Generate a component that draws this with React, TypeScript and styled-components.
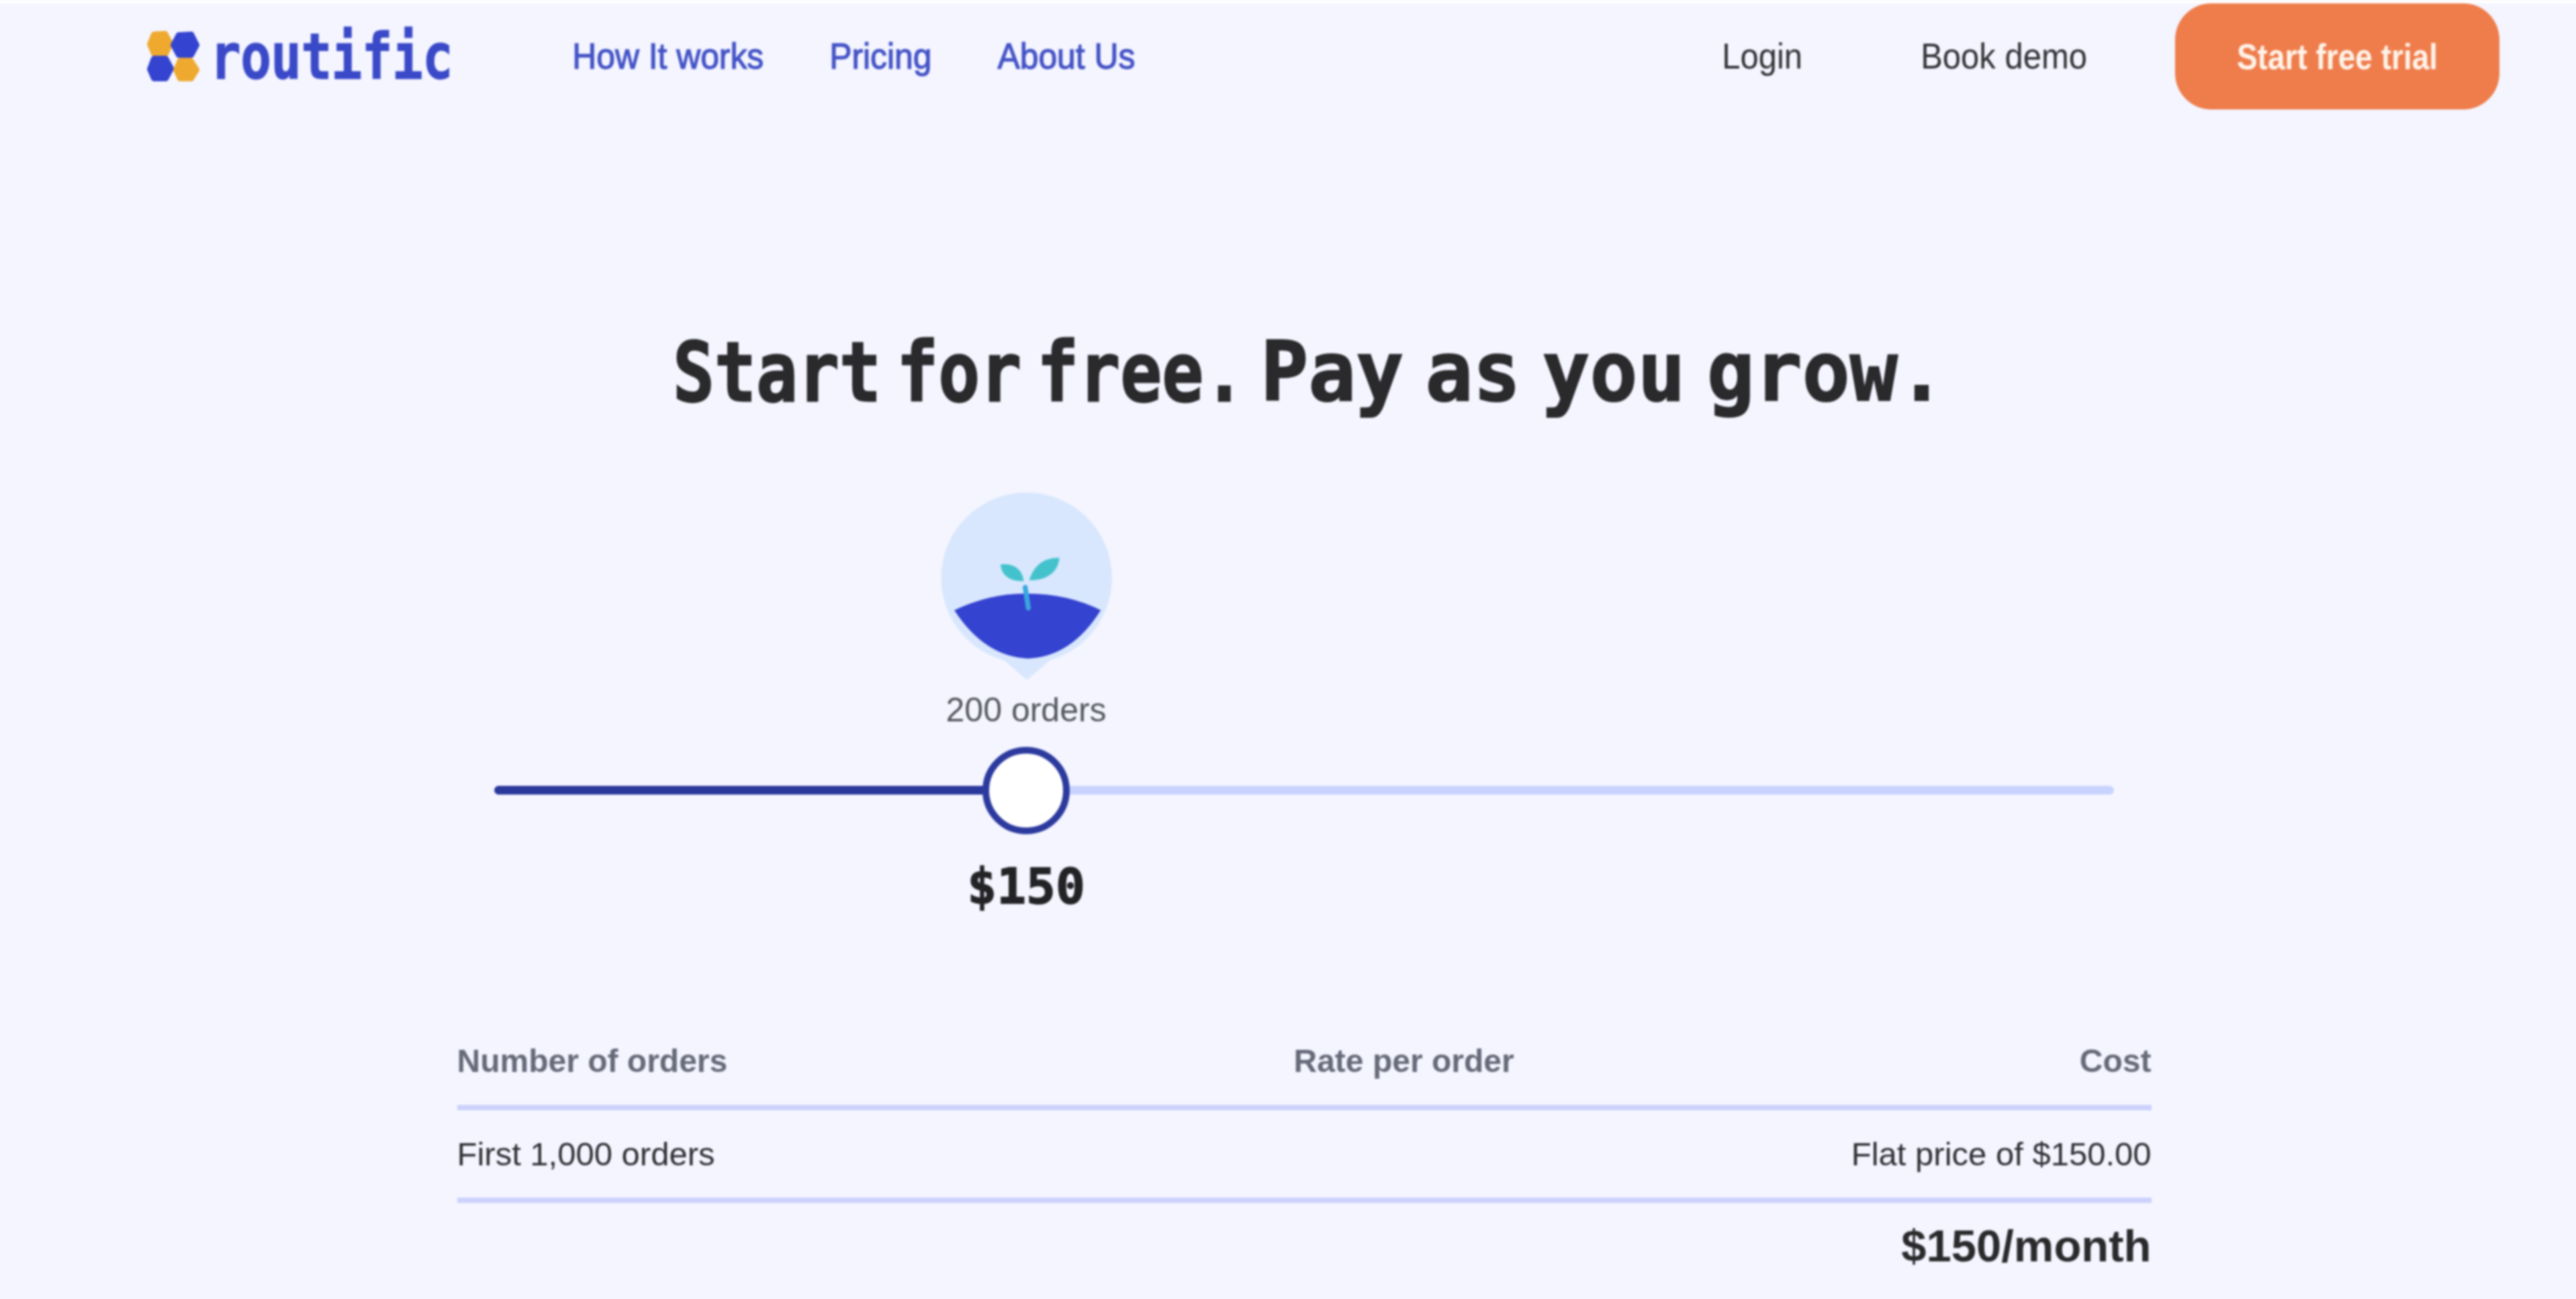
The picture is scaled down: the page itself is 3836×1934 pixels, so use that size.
import React, { ReactElement } from 'react'
import styled, { createGlobalStyle } from 'styled-components'

const GlobalStyle = createGlobalStyle`
  html, body {
    margin: 0;
    background: #f4f5ff;
  }
`

const Page = styled.div`
  box-sizing: border-box;
  height: 1934px;
  overflow: hidden;
  border-top: 5px solid #ffffff;
  background: #f4f5ff;
  color: #2a2a2c;
  font-family: 'Liberation Sans', Arial, sans-serif;
  filter: blur(1.4px);
`

const Header = styled.header`
  display: flex;
  align-items: center;
  height: 158px;
  padding: 0 114px 0 219px;
`

const Brand = styled.a`
  display: flex;
  align-items: center;
  gap: 16px;
  margin-right: 178px;
`

const BrandName = styled.span`
  font-family: 'DejaVu Sans Mono', monospace;
  font-size: 76px;
  font-weight: 700;
  line-height: 100px;
  letter-spacing: -0.6px;
  color: #3a49c8;
  -webkit-text-stroke: 1px #3a49c8;
  transform: scaleY(1.25);
`

const Nav = styled.nav`
  display: flex;
  gap: 98px;
`

const NavLink = styled.a`
  font-size: 49.8px;
  color: #4453c6;
  -webkit-text-stroke: 1.2px #4453c6;
  transform: scaleY(1.08);
`

const Actions = styled.div`
  display: flex;
  align-items: center;
  margin-left: auto;
`

const PlainLink = styled.a<{ $gap: number }>`
  margin-right: ${p => p.$gap}px;
  font-size: 49px;
  color: #303034;
  transform: scaleY(1.08);
`

const TrialButton = styled.button`
  width: 483px;
  height: 158px;
  border: 0;
  border-radius: 54px;
  background: #ef7d4c;
  color: #fff4ea;
  font-family: 'Liberation Sans', Arial, sans-serif;
  font-size: 46px;
  font-weight: 700;
`

const TrialLabel = styled.span`
  display: inline-block;
  transform: scaleY(1.18);
`

const Main = styled.main`
  display: flex;
  flex-direction: column;
  align-items: center;
  padding-left: 48px;
`

const Heading = styled.h1`
  margin: 327px 0 0 15px;
  font-family: 'DejaVu Sans Mono', monospace;
  font-weight: 700;
  line-height: 130px;
  color: #2a2a2c;
  white-space: pre;
  -webkit-text-stroke: 2px #2a2a2c;
`

const HeadingPart = styled.span<{ $size: number; $words: number; $stretch: number }>`
  display: inline-block;
  font-size: ${p => p.$size}px;
  word-spacing: ${p => p.$words}px;
  transform: scaleY(${p => p.$stretch});
  transform-origin: 50% 75%;
`

const Slider = styled.section`
  width: 2412px;
  margin-top: 83px;
`

const AtValue = styled.div<{ $pct: number }>`
  display: flex;
  flex-direction: column;
  align-items: center;
  width: 400px;
  margin-left: calc(${p => p.$pct}% - 200px);
`

const OrderCount = styled.div`
  margin-top: 8px;
  font-size: 50px;
  line-height: 66px;
  color: #55575e;
`

const Track = styled.div`
  position: relative;
  height: 13px;
  margin-top: 80px;
  border-radius: 7px;
  background: #c8d4ff;
`

const TrackFill = styled.div<{ $pct: number }>`
  width: ${p => p.$pct}%;
  height: 100%;
  border-radius: 7px;
  background: #2a389c;
`

const Thumb = styled.div<{ $pct: number }>`
  position: absolute;
  top: 50%;
  left: ${p => p.$pct}%;
  box-sizing: border-box;
  width: 130px;
  height: 130px;
  border: 10px solid #2c3a9e;
  border-radius: 50%;
  background: #ffffff;
  transform: translate(-50%, -50%);
`

const Price = styled.div`
  margin-top: 92px;
  font-family: 'DejaVu Sans Mono', monospace;
  font-size: 73px;
  font-weight: 700;
  line-height: 90px;
  color: #232326;
  -webkit-text-stroke: 1.5px #232326;
`

const Table = styled.section`
  width: 2523px;
  margin-top: 163px;
`

const Row = styled.div<{ $height: number; $bold?: boolean }>`
  display: grid;
  grid-template-columns: 1246px 1fr auto;
  align-items: center;
  height: ${p => p.$height}px;
  padding-bottom: ${p => (p.$bold ? 14 : 0)}px;
  border-bottom: 8px solid #ccd2fb;
  font-size: ${p => (p.$bold ? 48 : 49)}px;
  font-weight: ${p => (p.$bold ? 700 : 400)};
  color: ${p => (p.$bold ? '#666978' : '#2f2f33')};
`

const Total = styled.div`
  margin-top: 26px;
  font-size: 67px;
  font-weight: 700;
  line-height: 76px;
  text-align: right;
  color: #2a2a2c;
`

// four hexagonal petals, traced from the reference mark
const LogoMark = () => (
  <svg width='78' height='76' viewBox='0 0 78 76'>
    <g strokeWidth='8' strokeLinejoin='round'>
      <path d='M10 5 27 4 35 19 28 34 10 34 4 20Z' fill='#efa92f' stroke='#efa92f' />
      <path d='M47 6 66 5 74 21 66 36 47 36 39 21Z' fill='#3443d0' stroke='#3443d0' />
      <path d='M10 41 28 41 36 56 28 71 10 71 4 57Z' fill='#3443d0' stroke='#3443d0' />
      <path d='M49 44 65 44 74 58 66 71 49 71 43 58Z' fill='#efa92f' stroke='#efa92f' />
    </g>
  </svg>
)

const SproutPin = () => (
  <svg width='255' height='283' viewBox='175 95 765 850'>
    <circle cx='558' cy='478' r='382' fill='#d8e7fd' />
    <path d='M450 840 560 934 670 840Z' fill='#d8e7fd' />
    <path d='M235 622Q400 545 560 548 740 548 890 622 760 830 565 838 370 830 235 622Z' fill='#3443d0' />
    <path d='M552 520 566 612' stroke='#38a8e0' strokeWidth='22' strokeLinecap='round' />
    <path d='M570 488C590 420 640 385 705 388 700 450 650 490 570 488Z' fill='#44c2cc' />
    <path d='M545 492C490 495 445 470 442 418 500 410 540 440 545 492Z' fill='#44c2cc' />
  </svg>
)

const SLIDER_PCT = 32.84

const App = (): ReactElement => (
  <Page>
    <GlobalStyle />
    <Header>
      <Brand>
        <LogoMark />
        <BrandName>routific</BrandName>
      </Brand>
      <Nav>
        <NavLink>How It works</NavLink>
        <NavLink>Pricing</NavLink>
        <NavLink>About Us</NavLink>
      </Nav>
      <Actions>
        <PlainLink $gap={176}>Login</PlainLink>
        <PlainLink $gap={131}>Book demo</PlainLink>
        <TrialButton>
          <TrialLabel>Start free trial</TrialLabel>
        </TrialButton>
      </Actions>
    </Header>
    <Main>
      <Heading>
        <HeadingPart $size={103} $words={-39} $stretch={1.2}>Start for free. </HeadingPart>
        <HeadingPart $size={118} $words={-39} $stretch={1.047}>Pay as you grow.</HeadingPart>
      </Heading>
      <Slider>
        <AtValue $pct={SLIDER_PCT}>
          <SproutPin />
          <OrderCount>200 orders</OrderCount>
        </AtValue>
        <Track>
          <TrackFill $pct={SLIDER_PCT} />
          <Thumb $pct={SLIDER_PCT} />
        </Track>
        <AtValue $pct={SLIDER_PCT}>
          <Price>$150</Price>
        </AtValue>
      </Slider>
      <Table>
        <Row $height={103} $bold>
          <span>Number of orders</span>
          <span>Rate per order</span>
          <span>Cost</span>
        </Row>
        <Row $height={130}>
          <span>First 1,000 orders</span>
          <span />
          <span>Flat price of $150.00</span>
        </Row>
        <Total>$150/month</Total>
      </Table>
    </Main>
  </Page>
)

export default App
